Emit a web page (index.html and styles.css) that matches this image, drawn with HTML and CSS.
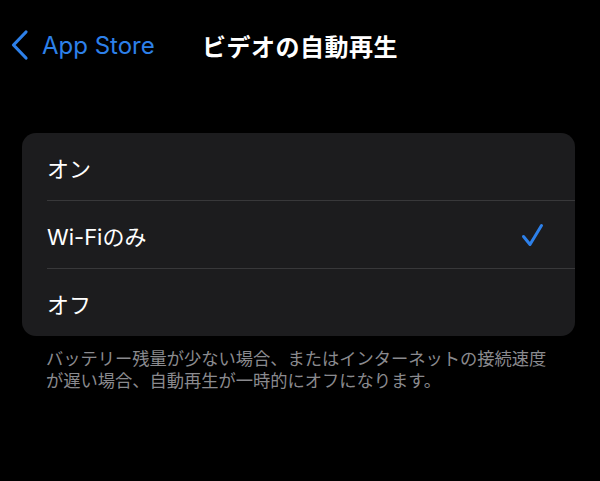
FILE: index.html
```html
<!DOCTYPE html>
<html lang="ja">
<head>
    <meta charset="UTF-8">
    <meta name="viewport" content="width=device-width, initial-scale=1.0">
    <title>ビデオの自動再生</title>
    <link rel="stylesheet" href="styles.css">
</head>
<body>
    <header class="nav-bar">
        <a class="back-link" href="#">
            <svg class="back-chevron" width="19" height="32" viewBox="0 0 19 32">
                <path d="M16 3 L3.5 16 L16 29" fill="none" stroke="currentColor" stroke-width="3.2" stroke-linecap="round" stroke-linejoin="round"/>
            </svg>
            <span>App Store</span>
        </a>
        <h1 class="nav-title">ビデオの自動再生</h1>
        <div></div>
    </header>

    <ul class="option-list">
        <li class="option-item"><span>オン</span></li>
        <li class="option-item selected">
            <span>Wi-Fiのみ</span>
            <svg class="check" width="23" height="24" viewBox="0 0 23 24">
                <path d="M2.5 13.5 L9 21.5 L20.5 2.5" fill="none" stroke="currentColor" stroke-width="3" stroke-linecap="round" stroke-linejoin="round"/>
            </svg>
        </li>
        <li class="option-item"><span>オフ</span></li>
    </ul>

    <p class="footnote">バッテリー残量が少ない場合、またはインターネットの接続速度<br>が遅い場合、自動再生が一時的にオフになります。</p>
</body>
</html>
```

FILE: styles.css
```css
body {
    margin: 0;
    background: #000;
    color: #fff;
    font-family: Inter, "Noto Sans CJK JP", sans-serif;
}

/* Barre de navigation */
.nav-bar {
    display: grid;
    grid-template-columns: 1fr auto 1fr;
    align-items: center;
    height: 90px;
}

.back-link {
    display: flex;
    align-items: center;
    gap: 13px;
    padding-left: 10px;
    color: #2d80ea;
    text-decoration: none;
    font-size: 24px;
}

.back-chevron {
    display: block;
}

.nav-title {
    margin: 0;
    font-size: 24px;
    font-weight: bold;
    letter-spacing: 0.5px;
}

/* Liste des options */
.option-list {
    list-style: none;
    margin: 43px 25px 0 22px;
    padding: 0;
    background: #1c1c1e;
    border-radius: 14px;
    overflow: hidden;
}

.option-item {
    display: flex;
    align-items: center;
    justify-content: space-between;
    height: 67px;
    margin-left: 25px;
    padding-right: 31px;
    font-size: 22px;
}

.option-item + .option-item {
    border-top: 1px solid #38383a;
}

.check {
    color: #2d80ea;
    display: block;
}

.footnote {
    margin: 12px 20px 0 46px;
    font-size: 17.25px;
    line-height: 22px;
    color: #8a8a8e;
}
```
